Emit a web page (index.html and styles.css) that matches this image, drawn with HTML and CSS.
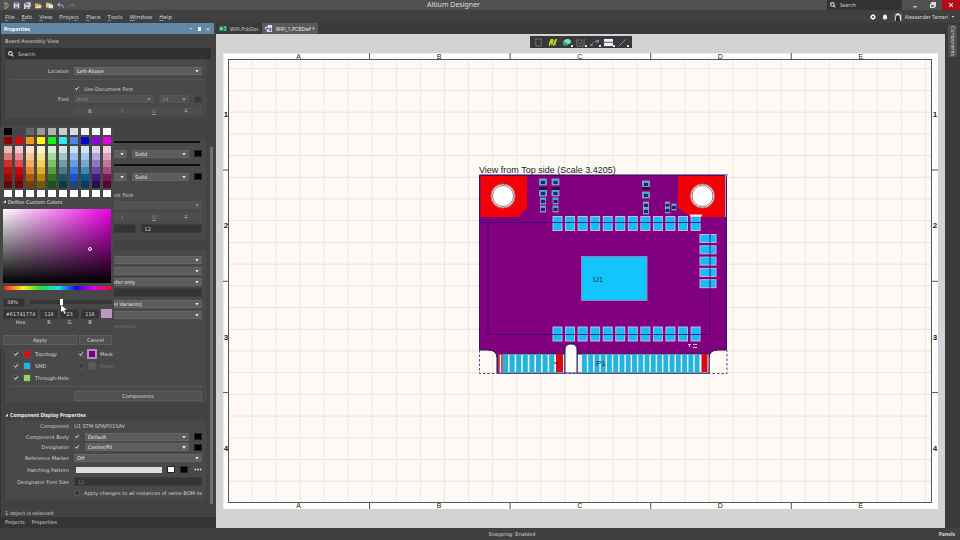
FILE: index.html
```
<!DOCTYPE html>
<html lang="en">
<head>
<meta charset="utf-8">
<title>Altium Designer</title>
<link rel="stylesheet" href="styles.css">
</head>
<body>
<header class="titlebar">
  <div class="quick">
    <svg viewBox="0 0 10 10"><path d="M3 1h3q3 1 3 4t-3 4H3M3 3h3v4H3" fill="none" stroke="#d3bd87"/></svg>
    <svg viewBox="0 0 10 10"><path d="M1 1h8v8H1z" fill="#d5d5e5"/><path d="M3 1h4v3H3zM3 6h4v3H3z" fill="#77779a"/></svg>
    <svg viewBox="0 0 10 10"><path d="M3 0h7v7H3z" fill="#a9a9d2"/><path d="M0 2h8v8H0z" fill="#d5d5ea"/><path d="M2 2h4v3H2zM2 7h4v3H2z" fill="#77779a"/></svg>
    <svg viewBox="0 0 10 10"><path d="M0 2h4l1 1h3v2H3L0 9z" fill="#d1b56c"/><path d="M3 5h7L8 9H0z" fill="#f5dd9a"/></svg>
    <svg viewBox="0 0 10 10"><path d="M0 1h4l1 1h3v6H0z" fill="#d9c38b"/><path d="M4 4h6v5H4z" fill="#eee5c9"/></svg>
    <svg viewBox="0 0 10 10"><path d="M4 1L1 4l3 3M1 4h5q3 0 3 4" fill="none" stroke="#b3bcd0" stroke-width="1.4"/></svg>
    <svg viewBox="0 0 10 10"><path d="M6 1l3 3-3 3M9 4H4Q1 4 1 8" fill="none" stroke="#737373" stroke-width="1.4"/></svg>
  </div>
  <h1>Altium Designer</h1>
  <div class="window-tools">
    <label class="top-search"><svg viewBox="0 0 10 10"><circle cx="4" cy="4" r="3"/><path d="M6 6l3 3"/></svg><input type="search" placeholder="Search" aria-label="Search commands"></label>
    <button aria-label="Minimize"><svg viewBox="0 0 10 10"><path d="M2 8h6"/></svg></button>
    <button aria-label="Restore"><svg viewBox="0 0 10 10"><path d="M1 4h6v5H1zM3 4V1h6v6H7M3 2h6"/></svg></button>
    <button class="close" aria-label="Close"><svg viewBox="0 0 10 10"><path d="M2 2l6 6M8 2L2 8"/></svg></button>
  </div>
</header>
<nav class="menubar">
  <a href="#"><u>F</u>ile</a><a href="#"><u>E</u>dit</a><a href="#"><u>V</u>iew</a><a href="#">Proje<u>c</u>t</a><a href="#"><u>P</u>lace</a><a href="#"><u>T</u>ools</a><a href="#"><u>W</u>indow</a><a href="#"><u>H</u>elp</a>
  <div class="account">
    <svg viewBox="0 0 10 10"><circle cx="5" cy="5" r="2.7" fill="none" stroke="#fff" stroke-width="2"/><path d="M5 0v2M5 8v2M0 5h2M8 5h2M1.5 1.5l1.4 1.4M7 7l1.5 1.5M1.5 8.5L3 7M7 3l1.5-1.5" stroke="#fff" stroke-width="1.5"/></svg>
    <svg viewBox="0 0 10 10"><path d="M5 1q3 0 3 4l1 3H1l1-3q0-4 3-4zM4 8.5h2V10H4z" fill="#fff"/></svg>
    <svg class="avatar" viewBox="0 0 10 10"><path d="M0 0h10v10H0z" fill="#555"/><path d="M1 10L2 2l3-2 4 3v7" fill="#e5e5e5"/><path d="M3 3h4v3l1 4H2z" fill="#262626"/></svg>
    <span>Alessander Tamari</span><i class="caret"></i>
  </div>
</nav>

<div class="shell">
<aside class="panel">
  <header class="panel-head"><h2>Properties</h2><i class="caret"></i><i class="pin"></i><button aria-label="Close panel">×</button></header>
  <p class="object-type">Board Assembly View</p>
  <label class="search"><svg viewBox="0 0 10 10"><circle cx="4" cy="4" r="3"/><path d="M6 6l3 3"/></svg><input type="search" placeholder="Search" aria-label="Search properties"></label>
  <div class="scroll">
  <div class="content">
    <section class="group first">
      <div class="row"><label for="loc">Location</label><span class="select"><select id="loc"><option>Left-Above</option></select></span></div>
      <hr>
      <div class="row"><span></span><label class="check"><input type="checkbox" checked>Use Document Font</label></div>
      <div class="row faded compact"><label for="font">Font</label><span class="select"><select id="font" disabled><option>Arial</option></select></span><span class="select size"><select aria-label="Font size" disabled><option>14</option></select></span><i class="chip dim"></i></div>
      <div class="row faded styles"><span></span><div class="styleset"><button><b>B</b></button><button><i>I</i></button><button><u>U</u></button><button><s>T</s></button></div></div>
    </section>
    <section class="group lines">
      <div class="stroke"></div>
      <div class="row"><span></span><span class="select tiny"><select aria-label="Line width"><option></option></select></span><span class="select"><select aria-label="Line style"><option>Solid</option></select></span><i class="chip"></i></div>
      <div class="stroke"></div>
      <div class="row"><span></span><span class="select tiny"><select aria-label="Second line width"><option></option></select></span><span class="select"><select aria-label="Second line style"><option>Solid</option></select></span><i class="chip"></i></div>
      <div class="row top"><span></span><label class="check"><input type="checkbox" checked>Use Document Font</label></div>
      <div class="row faded compact"><span></span><span class="select"><select aria-label="Caption font" disabled><option></option></select></span></div>
      <div class="row faded styles"><span></span><div class="styleset"><button><b>B</b></button><button><i>I</i></button><button><u>U</u></button><button><s>T</s></button></div></div>
      <div class="row"><span></span><input class="field" aria-label="Scale" value=""><input class="field" aria-label="Text height" value="12"></div>
    </section>
    <section class="group">
      <div class="row"><span></span><span class="select"><select aria-label="View side"><option></option></select></span></div>
      <div class="row"><span></span><span class="select"><select aria-label="View layer"><option></option></select></span></div>
      <div class="row"><span></span><span class="select"><select aria-label="Show components"><option>Component prefer only</option></select></span></div>
      <div class="row"><span></span><input class="field" aria-label="Note"></div>
      <div class="row"><span></span><span class="select"><select aria-label="Variant"><option>[Assembly Level Variants]</option></select></span></div>
      <div class="row"><span></span><span class="select"><select aria-label="Variant style"><option></option></select></span></div>
      <div class="row faded"><span></span><label class="check"><input type="checkbox" disabled>Show box dimension</label></div>
      <div class="layers">
        <label class="check"><input type="checkbox" checked><i class="c-red"></i>Topology</label><label class="check"><input type="checkbox" checked><i class="c-mask"></i>Mask</label>
        <label class="check"><input type="checkbox" checked><i class="c-smd"></i>SMD</label><label class="check faded"><input type="checkbox" disabled><i class="c-paste"></i>Paste</label>
        <label class="check"><input type="checkbox" checked><i class="c-hole"></i>Through-Hole</label>
      </div>
      <hr>
      <div class="row"><span></span><button class="btn">Components</button></div>
    </section>
    <h3><i class="fold"></i>Component Display Properties</h3>
    <section class="group display">
      <div class="row compact"><span class="name">Component</span><output>U1 STM-SPWF01SAV</output></div>
      <div class="row"><label for="body">Component Body</label><input type="checkbox" checked aria-label="Show body"><span class="select"><select id="body"><option>Default</option></select></span><i class="chip"></i></div>
      <div class="row compact"><label for="des">Designator</label><input type="checkbox" checked aria-label="Show designator"><span class="select"><select id="des"><option>Center/Fit</option></select></span><i class="chip"></i></div>
      <div class="row"><label for="ref">Reference Marker</label><span class="select"><select id="ref"><option>Off</option></select></span></div>
      <div class="row spaced"><span class="name">Hatching Pattern</span><i class="hatch"></i><i class="chip white"></i><i class="chip"></i><button class="more" aria-label="More patterns"><svg viewBox="0 0 9 3"><circle cx="1.5" cy="1.5" r="1"/><circle cx="4.5" cy="1.5" r="1"/><circle cx="7.5" cy="1.5" r="1"/></svg></button></div>
      <div class="row"><label for="dfs">Designator Font Size</label><input id="dfs" class="field off" value="12" disabled></div>
      <div class="row clip"><span></span><label class="check"><input type="checkbox">Apply changes to all instances of same BOM item</label></div>
    </section>
  </div>
  <div class="scrollbar"></div>
  </div>
  <p class="selection">1 object is selected</p>
  <nav class="panel-tabs"><a href="#">Projects</a><a href="#">Properties</a></nav>

  <div class="picker">
    <div class="swatches"></div>
    <h4><i class="fold"></i>Define Custom Colors</h4>
    <div class="shade"><i></i></div>
    <div class="hue"></div>
    <div class="opacity"><input class="field" aria-label="Opacity" value="38%"><input type="range" aria-label="Opacity level" value="38"></div>
    <div class="values">
      <label><input class="field" value="#61741774">Hex</label>
      <label><input class="field" value="116">R</label>
      <label><input class="field" value="23">G</label>
      <label><input class="field" value="116">B</label>
      <i></i>
    </div>
    <div class="actions"><button class="btn">Apply</button><button class="btn">Cancel</button></div>
    <svg class="cursor" viewBox="0 0 6 9"><path d="M0 0v7l2-1.5L3.5 9l1-.5L3.3 5H6z" fill="#fff"/></svg>
  </div>
</aside>

<main class="workspace">
  <div class="tabs">
    <a href="#"><svg viewBox="0 0 9 8"><path d="M0 1h9v6H0z" fill="#178a55"/><path d="M1 3h3v2H1zM6 2h2v1H6zM6 5h2v1H6z" fill="#c9f1dc"/></svg>WiFi.PcbDoc</a>
    <a href="#" class="active"><svg viewBox="0 0 9 8"><path d="M3 0h5v8H2V5H0V2h3z" fill="#e1def2"/><path d="M1 3h3v2H1zM5 3h2v4H5z" fill="#665d91"/></svg>WiFi_1.PCBDwf *</a>
  </div>
  <div class="canvas">
    <svg class="sheet" viewBox="216 34 729 494" preserveAspectRatio="xMidYMid meet">
      <defs>
        <pattern id="grid" x="228.5" y="47.5" width="24.05" height="21.71" patternUnits="userSpaceOnUse"><path d="M24 0V22M0 21.5H24.1" fill="none" stroke="#eed8ce"/></pattern>
      </defs>
      <rect x="223" y="53" width="715" height="456" fill="#fff"/>
      <rect x="228.5" y="59.5" width="703" height="443" fill="#fff9f5"/>
      <rect x="228.5" y="59.5" width="703" height="443" fill="url(#grid)" stroke="#555"/>
      <path d="M223 53.5H938M223.5 53V509" stroke="#eee"/>
      <g class="zones"></g>
      <text class="caption" x="479" y="173">View from Top side (Scale 3.4205)</text>
      <path d="M479.5 175H726.5V350H718Q709 350 709 358V373H577V350Q577 344 571 344T565 350V373H497V358Q497 350 488 350H479.5z" fill="#800080" stroke="#20104b"/>
      <path d="M480.5 176H527V208L518 217H480.5z" fill="#f10008"/>
      <path d="M678 176H726V217H691L678 208z" fill="#f10008"/>
      <circle cx="503" cy="196" r="12" fill="#fff" stroke="#9d7780"/><circle cx="503" cy="196" r="10.5" fill="#fff" stroke="#b66"/>
      <circle cx="702.5" cy="196" r="12" fill="#fff" stroke="#9d7780"/><circle cx="702.5" cy="196" r="10.5" fill="#fff" stroke="#b66"/>
      <path d="M725.5 175v42" stroke="#9b9bdd"/>
      <g class="pads"></g>
      <path d="M690 215.5H702" stroke="#f3e6f7" stroke-width="2"/>
      <path d="M480 222.5H702M488 222V334.5H710V234" fill="none" stroke="#340078" stroke-opacity=".8"/>
      <rect x="581.5" y="256.5" width="65.5" height="44" fill="#12c5fc" stroke="#9580bd"/>
      <text class="ref" x="593" y="282">U1</text>
      <path d="M498 354H565V373H498zM577 354H709V373H577z" fill="#f2eef5" stroke="#222b55"/>
      <path d="M565 373V350Q565 344 571 344T577 350V373z" fill="#fffdfa" stroke="#222b55"/>
      <g class="fingers"></g>
      <text class="ref" x="596" y="366">P1</text>
      <path d="M499 354v18M502 354v18" stroke="#c61f2c" stroke-width="1.5"/>
      <path d="M556 354h7v18h-7zM701.5 354h6v18h-6z" fill="#dc0714"/>
      <path d="M554 363h4" stroke="#530047"/>
      <path d="M479.5 350V373.5H727V350" fill="none" stroke="#4d4aaa" stroke-dasharray="2.5 2"/>
      <path d="M726.5 175V350M479.5 175V350" stroke="#21206c"/><circle cx="726.5" cy="175" r="1.5" fill="#99c"/>
      <g class="parts"></g>
      <path d="M688 344.5h3M693 344.5h4M689.5 344v3M693 347.5h4" stroke="#ddcaec"/>
    </svg>
    <div class="draw-tools">
      <button aria-label="Board outline"><svg viewBox="0 0 10 10"><path d="M2 1h6v8H2z" fill="none" stroke="#a08a6a" stroke-dasharray="2 1"/></svg></button>
      <button aria-label="Assembly view"><svg viewBox="0 0 10 10"><path d="M1 9V6l2-5h3L4 6H3L2 9zM5 9l1-3 2-5h2L8 8z" fill="#b9e01a"/><path d="M6 2l-2 6" stroke="#e9ef4a"/></svg></button>
      <button aria-label="Board section"><svg viewBox="0 0 10 10"><ellipse cx="6" cy="4" rx="4" ry="3" fill="#76dfc8"/><path d="M0 4l5 1 2 3-5 1z" fill="#3a9d8b"/></svg><i></i></button>
      <button aria-label="Dimension"><svg viewBox="0 0 10 10"><path d="M1 1v8h8V1M3 6h4M3 1v3M6 1v3" fill="none" stroke="#777d8c"/></svg><i></i></button>
      <button aria-label="Callout"><svg viewBox="0 0 10 10"><path d="M1 8l4-4h3" fill="none" stroke="#7b8498"/><path d="M7 2h3v3H7zM0 7h3v2H0z" fill="#7b8498"/></svg><i></i></button>
      <button aria-label="Table"><svg viewBox="0 0 10 10"><path d="M0 1h10v8H0z" fill="#eef2fb"/><path d="M0 4h10v1.5H0z" fill="#6080bf"/></svg><i></i></button>
      <button aria-label="Line"><svg viewBox="0 0 10 10"><path d="M1 9l8-8" stroke="#8492ac"/></svg><i></i></button>
    </div>
  </div>
</main>
<aside class="dock"><button>Components</button></aside>
</div>
<footer class="status"><span>Snapping: Enabled</span><button>Panels</button></footer>
<script src="script.js"></script>
</body>
</html>
```
FILE: styles.css
```
* { box-sizing: border-box; }
html { background: #3d3d3d; }
body { margin: 0; min-height: 100vh; display: flex; flex-direction: column; background: #3d3d3d; color: #d6d6d6; font: 5px/8px "Noto Sans", "Open Sans", sans-serif; }
h1, h2, h3, h4, p { margin: 0; font-size: inherit; font-weight: 400; }
button, input, select { font: inherit; color: inherit; margin: 0; padding: 0; border: 0; border-radius: 0; background: none; min-width: 0; outline: 0; }
input::placeholder { color: #cfcfcf; opacity: 1; }
input[type=search] { appearance: none; }
a { color: inherit; text-decoration: none; }
svg { display: block; flex: none; }

.titlebar { display: grid; grid-template-columns: 1fr auto 1fr; align-items: center; height: 10px; background: #505050; }
.titlebar h1 { padding-right: 53px; font-size: 7px; line-height: 10px; color: #dedede; }
.quick { display: flex; gap: 4px; padding-left: 2px; }
.quick svg { width: 7px; height: 7px; }
.window-tools { display: flex; justify-content: flex-end; height: 10px; }
.window-tools button { width: 18px; display: grid; place-items: center; }
.window-tools button svg { width: 6px; height: 6px; fill: none; stroke: #ddd; stroke-width: 2; }
.window-tools .close { background: #b70a19; }
.top-search { display: flex; align-items: center; gap: 4px; width: 75px; margin-right: 4px; padding-left: 3px; background: #333; font-size: 5px; }
.top-search input { width: 50px; }
.top-search svg, .search svg { width: 6px; height: 6px; fill: none; stroke: #ccc; stroke-width: 2; }
.menubar { display: flex; align-items: center; gap: 7px; height: 13px; padding-left: 5px; background: #404040; font: 6px/12px "Open Sans", "Noto Sans", sans-serif; color: #ddd; }
.menubar u { text-underline-offset: 1px; text-decoration-thickness: 1px; text-decoration-color: #888; }
.account { display: flex; align-items: center; gap: 3px; margin-left: auto; padding-right: 5px; font-family: "Noto Sans", sans-serif; font-size: 5px; }
.account svg { width: 6px; height: 6px; margin-right: 3px; }
.account .avatar { width: 8px; height: 8px; margin: 0; }
.caret { display: block; width: 4px; height: 2px; background: #ddd; clip-path: polygon(0 0, 100% 0, 50% 100%); }

.shell { flex: 1; display: flex; min-height: 0; }
.panel { position: relative; width: 216px; flex: none; display: flex; flex-direction: column; background: #424242; border-left: 1px solid #333; font-family: "DejaVu Sans", sans-serif; }
.panel-head { display: flex; align-items: center; gap: 5px; height: 11px; margin-right: 2px; padding: 0 4px 0 3px; background: #6288a8; color: #fff; }
.panel-head h2, h3 { font-family: "Noto Sans", sans-serif; font-weight: 700; }
.panel-head h2 { flex: 1; }
.panel-head .pin { width: 3px; height: 4px; background: #fff; }
.object-type { padding: 3px 4px; }
.search { display: flex; align-items: center; gap: 4px; height: 11px; margin: 0 5px 0 4px; padding-left: 3px; background: #303030; }
.scroll { flex: 1; display: flex; gap: 3px; padding: 1px 3px 0 4px; }
.content { width: 202px; overflow: hidden; }
.scrollbar { width: 3px; margin: 87px 0 2px; background: #717171; }
.group { background: #494949; padding: 4px 4px 1px 0; border: 1px solid #454545; }
.group.first { height: 59px; margin-bottom: 20px; }
.group hr { height: 1px; border: 0; margin: 3px 0 3px 4px; background: #565656; }
.row { display: flex; gap: 5px; align-items: center; height: 11px; color: #d2d2d2; }
.row > :first-child { flex: none; width: 63px; text-align: right; white-space: nowrap; }
.row > .select, .row > .field, .row > .btn { flex: 1; }
.row.compact { height: 10px; }
.row.spaced { height: 13px; }
.row.styles { height: 13px; }
.row.top { margin-top: 7px; }
.row.clip { overflow: hidden; }
.select { position: relative; height: 8px; background: #5d5d5d; border: 1px solid #666; border-width: 1px 0; }
.select::after { content: ""; position: absolute; right: 3px; top: 2px; width: 4px; height: 3px; background: #eee; clip-path: polygon(0 0, 100% 0, 50% 100%); }
.select select { display: block; appearance: none; width: 100%; height: 6px; padding: 0 3px; line-height: 6px; color: #eee; opacity: 1; }
.select.size { flex: 0 0 30px; }
.select.tiny { flex: 0 0 53px; }
.row.faded, .check.faded { color: #777; }
.faded > label[for] { color: #d2d2d2; }
.faded .select { background: #525252; border-color: #555; }
.faded .select select { color: #888; }
.faded .select::after { background: #888; }
.chip { width: 8px; height: 7px; flex: none; background: #000; border: 1px solid #222; }
.chip.dim { background: #383838; border-color: #444; }
.chip.white { background: #fff; }
.styleset { flex: 1; height: 8px; display: grid; grid-template-columns: repeat(4, 1fr); background: #4e4e4e; color: #999; }
.check { display: flex; align-items: center; gap: 4px; white-space: nowrap; }
input[type=checkbox] { appearance: none; flex: none; width: 6px; height: 6px; background: #3c3c3c; border: 1px solid #555; }
input[type=checkbox]:checked::before { content: ""; display: block; width: 4px; height: 4px; background: #ddd; clip-path: polygon(0 50%, 20% 35%, 40% 65%, 85% 0, 100% 15%, 45% 100%); }
.field { height: 9px; padding: 0 3px; background: #343434; border: 1px solid #3d3d3d; }
.row .off { color: #777; }
.lines { height: 102px; padding-top: 0; margin-bottom: 8px; }
.stroke { height: 2px; margin: 1px 2px 5px 73px; background: #111; }
.lines .row + .stroke { margin-top: 5px; }
.layers { display: grid; grid-template-columns: 65px 1fr; row-gap: 4px; padding: 19px 0 1px 7px; }
.layers i { width: 8px; height: 8px; border: 1px solid #555; }
.c-red { background: #e30712; }
.c-smd { background: #21b4e5; }
.c-hole { background: #99d35d; }
.c-paste { background: #566052; }
.layers .c-mask { background: #740080; border-color: #b58bc9; outline: 1px solid #b58bc9; }
.btn { height: 10px; background: #505050; border: 1px solid #5d5d5d; color: #ddd; text-align: center; }
h3 { display: flex; align-items: center; gap: 2px; height: 10px; margin-top: 7px; color: #eee; white-space: nowrap; }
.group.display { padding-top: 0; }
.fold { width: 3px; height: 3px; background: #ddd; clip-path: polygon(100% 0, 100% 100%, 0 100%); }
.hatch { flex: 1; height: 6px; margin-left: 2px; background: #ddd; }
.more { width: 9px; height: 5px; display: grid; place-items: center; }
.more svg { width: 8px; height: 3px; fill: #ddd; }
.selection { padding: 3px 4px 0; }
.panel-tabs { display: flex; gap: 7px; height: 11px; padding-left: 4px; line-height: 11px; background: #353535; }

.picker { position: absolute; top: 103px; left: -1px; width: 114px; padding: 2px 2px 4px 3px; background: #474747; }
.swatches { display: grid; grid-template-columns: repeat(10, 8px); gap: 2px 3px; margin-left: 1px; }
.swatches > * { height: 7px; }
.swatches .ramp { height: 42px; display: grid; grid-template-rows: repeat(6, 1fr); }
.picker h4 { display: flex; align-items: center; gap: 2px; height: 9px; margin-bottom: 3px; color: #e3e3e3; }
.shade { position: relative; height: 74px; margin-right: 1px; background: linear-gradient(to top, #000, transparent), linear-gradient(to right, #fff, #f000e8); }
.shade i { position: absolute; left: 85px; top: 38px; width: 4px; height: 4px; border: 1px solid #fff; border-radius: 50%; }
.hue { height: 4px; margin: 3px 1px 7px; background: linear-gradient(to right, #f22, #fe2 18%, #2d3 34%, #2de 51%, #11d 67%, #d0d 83%, #e12); }
.opacity { display: flex; align-items: center; gap: 5px; height: 10px; }
.opacity .field { width: 22px; }
.opacity input[type=range] { appearance: none; flex: 1; height: 4px; background: #363636; }
.opacity input[type=range]::-webkit-slider-thumb { appearance: none; width: 3px; height: 6px; background: #fff; }
.values { display: grid; grid-template-columns: 35px 18px 19px 18px 11px; gap: 2px; margin-top: 2px; }
.values label { display: flex; flex-direction: column; text-align: center; line-height: 7px; }
.values .field { width: 100%; height: 10px; padding: 0; text-align: center; }
.values > i { height: 9px; background: #b99abc; }
.actions { display: grid; grid-template-columns: 74px 1fr; gap: 2px; margin-top: 9px; }
.cursor { position: absolute; left: 61px; top: 179px; width: 6px; height: 9px; }

.workspace { flex: 1; min-width: 0; display: flex; flex-direction: column; }
.tabs { display: flex; height: 11px; background: #3a3a3a; }
.tabs a { display: flex; align-items: center; gap: 3px; padding: 0 3px; color: #ccc; }
.tabs a.active { background: #5a5a5a; color: #eee; }
.tabs svg { width: 8px; height: 7px; }
.canvas { position: relative; flex: 1; min-height: 0; display: flex; background: #d3d3d3; }
.sheet { flex: 1; width: 100%; min-width: 0; }
.sheet text { font-family: "Liberation Sans", sans-serif; fill: #222; }
.sheet .caption { font-size: 9px; }
.sheet .ref { font-size: 8px; fill: #20265f; }
.sheet .zone-x, .sheet .zone-y { font-size: 7px; text-anchor: middle; }
.sheet .zone-y { font-size: 8px; font-weight: 700; }
.draw-tools { position: absolute; top: 2px; left: 50%; margin-left: -51px; padding: 0 2px; display: flex; height: 12px; background: #383838; }
.draw-tools button { position: relative; width: 14px; display: grid; place-items: center; }
.draw-tools svg { width: 9px; height: 9px; }
.draw-tools i { position: absolute; right: 1px; bottom: 1px; width: 2px; height: 2px; background: #ddd; }
.dock { width: 15px; flex: none; padding: 2px 3px; background: #3b3b3b; }
.dock button { writing-mode: vertical-rl; width: 9px; height: 32px; background: #505050; line-height: 9px; }
.status { display: grid; grid-template-columns: 1fr auto 1fr; align-items: center; height: 12px; padding: 0 5px; background: #404040; }
.status span { grid-column: 2; padding-left: 64px; font-family: "DejaVu Sans", sans-serif; }
.status button { justify-self: end; font-weight: 700; }
```
FILE: script.js
```
const swatches = document.querySelector('.swatches');
const greys = ['#000', '#444', '#666', '#999', '#b3b3b3', '#ccc', '#d5dae5', '#eee', '#f7f7f7', '#fff'];
const brights = ['#8b0009', '#df000b', '#eb981d', '#fff31a', '#16ef18', '#2cecef', '#4d87e8', '#0505c8', '#8d00de', '#ed00df'];
const ramps = [
  ['#efb7b2', '#d97775', '#cc3229', '#b11410', '#8c1010', '#5b0808'],
  ['#f5c3ca', '#e68b96', '#db4c56', '#cc0610', '#a5000a', '#6d0008'],
  ['#ffe2c5', '#f9c58f', '#f3ac5e', '#dd842c', '#af580d', '#744007'],
  ['#fff0c3', '#f9df92', '#f2cf59', '#dead26', '#b38407', '#795a00'],
  ['#d6edce', '#a6d998', '#7cc166', '#579d3f', '#31702a', '#1e501b'],
  ['#d4e5e8', '#a2c4c8', '#6f9da2', '#438085', '#1a555e', '#0d3a43'],
  ['#c8dbfb', '#98bbec', '#6c9ce0', '#3c78d5', '#1556c5', '#1c4581'],
  ['#cde3f7', '#9ec7e8', '#72abd7', '#4388bd', '#0a5795', '#083b63'],
  ['#ddd3ee', '#b7a4d8', '#8f78c2', '#6846a2', '#371b75', '#241050'],
  ['#f0cddc', '#d8a1bb', '#bf759c', '#a64a7d', '#761848', '#4f092f']
];
const whites = Array(10).fill('#fff');

function addSwatches(parent, colors) {
  colors.forEach(color => {
    const b = document.createElement('button');
    b.style.background = color;
    b.setAttribute('aria-label', color);
    parent.append(b);
  });
}
addSwatches(swatches, greys);
addSwatches(swatches, brights);
ramps.forEach(ramp => {
  const col = document.createElement('div');
  col.className = 'ramp';
  addSwatches(col, ramp);
  swatches.append(col);
});
addSwatches(swatches, whites);

function shape(parent, name, attrs, text) {
  const el = document.createElementNS('http://www.w3.org/2000/svg', name);
  for (const key in attrs) el.setAttribute(key, attrs[key]);
  if (text) el.textContent = text;
  document.querySelector(parent).append(el);
}
const pad = (x, y, w, h) => shape('.pads', 'rect', { x, y, width: w, height: h, fill: '#12bff5', stroke: '#d2b0e8' });

for (let i = 0; i < 12; i++) {
  pad(553 + i * 12.55, 216.5, 9, 14);
  pad(553 + i * 12.55, 327, 9, 14);
}
for (let i = 0; i < 5; i++) pad(700, 234.5 + i * 11.3, 16, 8);
for (let i = 0; i < 8; i++) shape('.fingers', 'rect', { x: 503 + i * 6.6, y: 354.5, width: 5, height: 18, fill: '#20b6dc' });
for (let i = 0; i < 19; i++) shape('.fingers', 'rect', { x: 582 + i * 6.26, y: 354.5, width: 4.8, height: 18, fill: '#20b6dc' });

// Chip resistors and capacitors: light end caps around a dark body.
[[543, 182, 7], [543, 193, 7], [543, 201, 5], [543, 209, 5], [555.5, 182, 7], [555.5, 193, 7], [555.5, 201, 5], [555.5, 209, 5], [646, 184, 7], [646, 195, 7], [646, 205, 5], [646, 211, 5], [667.5, 205, 4], [667.5, 210, 4], [674, 207, 4]].forEach(([x, y, w]) => {
  shape('.parts', 'rect', { x: x - w / 2, y: y - 3, width: w, height: 6, fill: '#28a9c9', stroke: '#b9a3d6', 'stroke-width': 0.7 });
  shape('.parts', 'rect', { x: x - 2, y: y - 1, width: 4, height: 3, fill: '#152a5c' });
});
[543, 555.5, 646].forEach(x => shape('.parts', 'rect', { x: x - 4, y: 187, width: 8, height: 3, fill: '#3b0545' }));

['A', 'B', 'C', 'D', 'E'].forEach((name, i) => {
  const x = 298.5 + i * 140.6;
  shape('.zones', 'text', { class: 'zone-x', x, y: 59 }, name);
  shape('.zones', 'text', { class: 'zone-x', x, y: 508 }, name);
  if (i < 4) shape('.zones', 'path', { d: `M${x + 71} 53v6M${x + 71} 503v6`, stroke: '#555' });
});
['1', '2', '3', '4'].forEach((name, i) => {
  const y = 114 + i * 111.3;
  shape('.zones', 'text', { class: 'zone-y', x: 226, y: y + 3 }, name);
  shape('.zones', 'text', { class: 'zone-y', x: 935, y: y + 3 }, name);
  if (i < 3) shape('.zones', 'path', { d: `M223 ${y + 56}h6M932 ${y + 56}h6`, stroke: '#555' });
});
```
